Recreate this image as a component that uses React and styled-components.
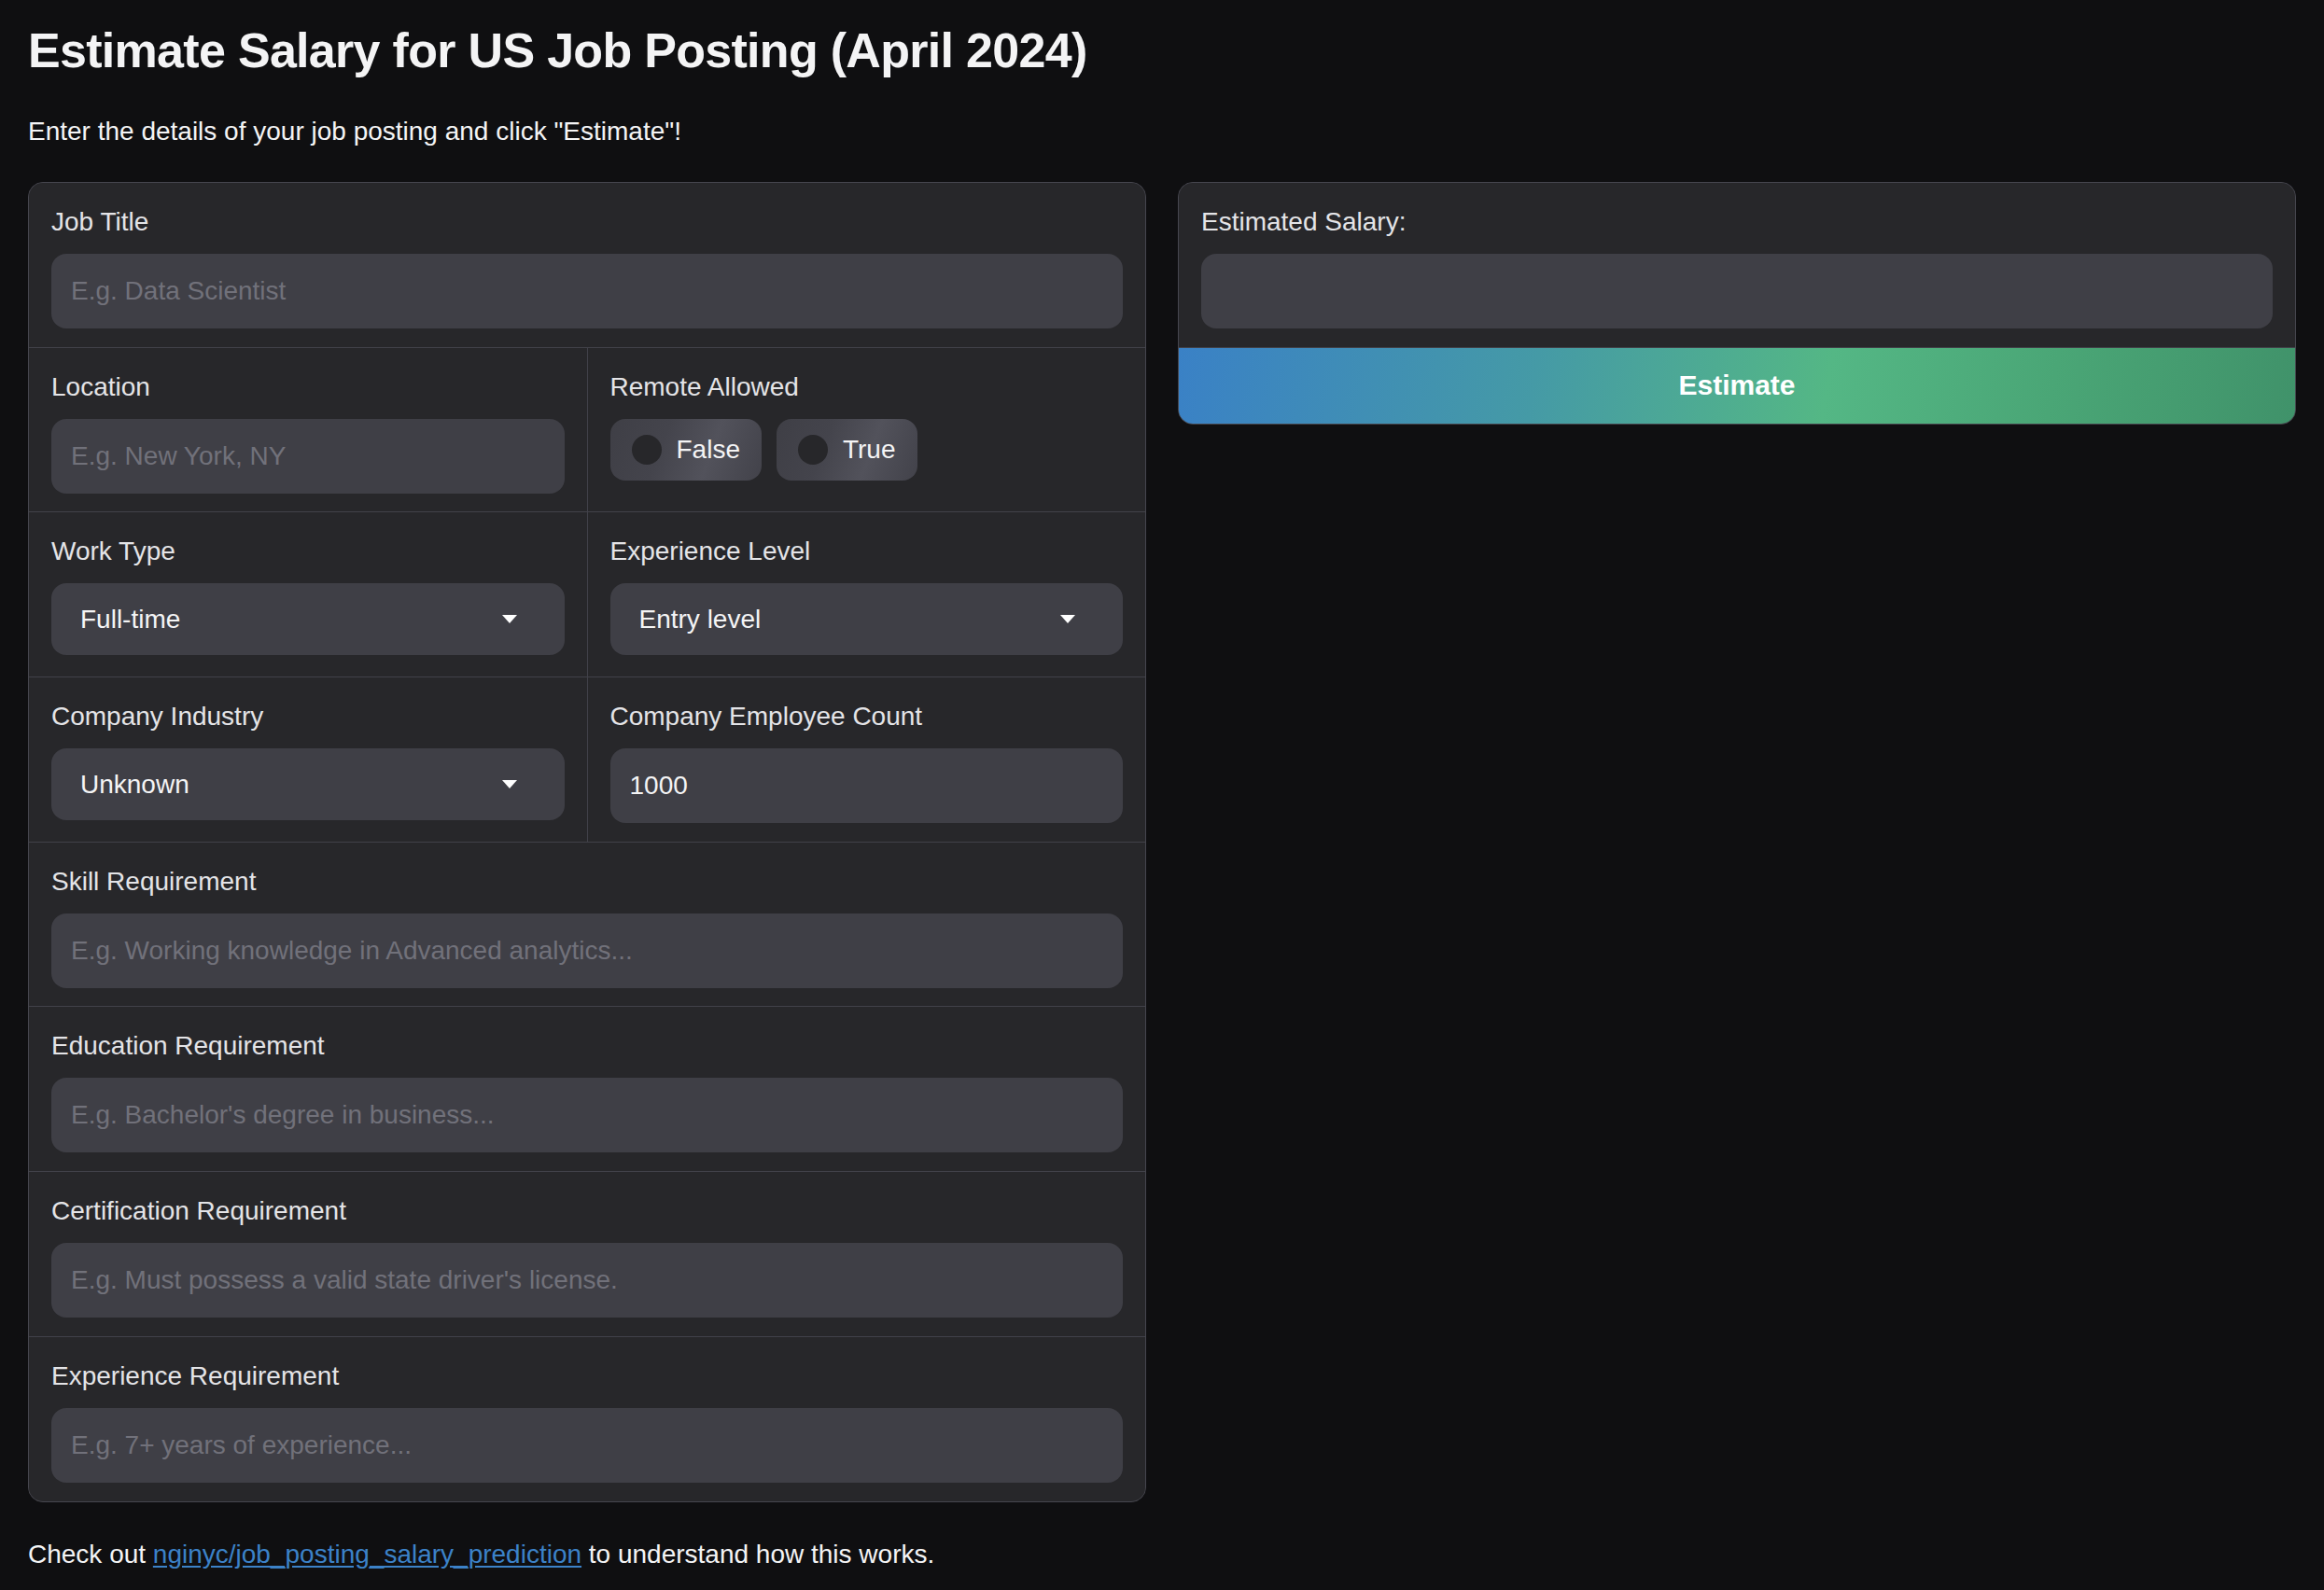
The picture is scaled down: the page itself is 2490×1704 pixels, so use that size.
import React from 'react';
import styled, {createGlobalStyle} from 'styled-components';

const GlobalStyle = createGlobalStyle`
	body {
		margin: 0;
		background: #0f0f11;
		color: #f4f4f5;
		font-family: 'Liberation Sans', Arial, sans-serif;
	}
	* {
		box-sizing: border-box;
	}
`;

const Page = styled.div`
	padding: 24px 30px 40px;
`;

const Title = styled.h1`
	margin: 0;
	font-size: 52px;
	line-height: 60px;
	font-weight: 700;
	letter-spacing: -0.7px;
	color: #f4f4f5;
`;

const Text = styled.p`
	margin: ${(p) => p.$margin || '0'};
	font-size: 28px;
	line-height: 36px;
	color: #f4f4f5;
`;

const Link = styled.a`
	color: #3c82c8;
	text-decoration: underline;
	text-underline-offset: 3px;
`;

const Columns = styled.div`
	display: grid;
	grid-template-columns: 1fr 1fr;
	gap: 34px;
	align-items: start;
`;

const Panel = styled.div`
	display: grid;
	grid-template-columns: ${(p) => (p.$single ? '1fr' : '1fr 1fr')};
	gap: 1px;
	background: #414149;
	border: 1px solid #46464e;
	border-radius: 16px;
	overflow: hidden;
`;

const Block = styled.div`
	grid-column: ${(p) => (p.$full ? '1 / -1' : 'auto')};
	min-height: 175.7px;
	padding: 24px 24px 19.7px;
	background: #27272a;
`;

const Label = styled.label`
	display: block;
	margin-bottom: 16px;
	font-size: 28px;
	line-height: 36px;
	color: #e4e4e7;
`;

const TextBox = styled.input`
	display: block;
	width: 100%;
	height: 80px;
	padding: 0 21px;
	border: none;
	border-radius: 16px;
	background: #3f3f46;
	color: #f4f4f5;
	font-family: inherit;
	font-size: 28px;
	outline: none;

	&::placeholder {
		color: #71717a;
	}
`;

const SelectBox = styled.div`
	display: flex;
	align-items: center;
	justify-content: space-between;
	height: 77px;
	padding: 0 51px 0 31px;
	border-radius: 16px;
	background: #3f3f46;
	font-size: 28px;
	color: #f4f4f5;
`;

const Caret = styled.span`
	width: 0;
	height: 0;
	border-left: 8.5px solid transparent;
	border-right: 8.5px solid transparent;
	border-top: 9px solid #ffffff;
`;

const RadioGroup = styled.div`
	display: flex;
	gap: 16px;
`;

const RadioPill = styled.label`
	display: flex;
	align-items: center;
	gap: 16px;
	height: 66px;
	padding: 0 23px 0 23px;
	border-radius: 16px;
	background: linear-gradient(110deg, #3f3f46 0%, #44444c 35%, #52525b 65%, #42424a 100%);
	font-size: 28px;
	color: #f4f4f5;
`;

const Dot = styled.span`
	width: 32px;
	height: 32px;
	border-radius: 50%;
	background: #27272a;
`;

const EstimateButton = styled.button`
	height: 81px;
	border: none;
	background: linear-gradient(100deg, #3a81c6 0%, #459aa6 32%, #54b785 58%, #4aa676 78%, #40926a 100%);
	color: #ffffff;
	font-family: inherit;
	font-size: 30px;
	font-weight: 700;
	cursor: pointer;
`;

const TextField = ({label, placeholder, value, full}) => (
	<Block $full={full}>
		<Label>{label}</Label>
		<TextBox placeholder={placeholder} defaultValue={value} />
	</Block>
);

const SelectField = ({label, value}) => (
	<Block>
		<Label>{label}</Label>
		<SelectBox>
			<span>{value}</span>
			<Caret />
		</SelectBox>
	</Block>
);

const App = () => {
	return (
		<Page>
			<GlobalStyle />
			<Title>Estimate Salary for US Job Posting (April 2024)</Title>
			<Text $margin='39px 0 36px'>Enter the details of your job posting and click "Estimate"!</Text>

			<Columns>
				<Panel>
					<TextField full label='Job Title' placeholder='E.g. Data Scientist' />
					<TextField label='Location' placeholder='E.g. New York, NY' />
					<Block>
						<Label>Remote Allowed</Label>
						<RadioGroup>
							<RadioPill>
								<Dot />
								False
							</RadioPill>
							<RadioPill>
								<Dot />
								True
							</RadioPill>
						</RadioGroup>
					</Block>
					<SelectField label='Work Type' value='Full-time' />
					<SelectField label='Experience Level' value='Entry level' />
					<SelectField label='Company Industry' value='Unknown' />
					<TextField label='Company Employee Count' value='1000' />
					<TextField full label='Skill Requirement' placeholder='E.g. Working knowledge in Advanced analytics...' />
					<TextField full label='Education Requirement' placeholder="E.g. Bachelor's degree in business..." />
					<TextField full label='Certification Requirement' placeholder="E.g. Must possess a valid state driver's license." />
					<TextField full label='Experience Requirement' placeholder='E.g. 7+ years of experience...' />
				</Panel>

				<Panel $single>
					<TextField label='Estimated Salary:' />
					<EstimateButton>Estimate</EstimateButton>
				</Panel>
			</Columns>

			<Text $margin='38px 0 0'>
				Check out <Link href='#'>nginyc/job_posting_salary_prediction</Link> to understand how this works.
			</Text>
		</Page>
	);
};

export default App;
